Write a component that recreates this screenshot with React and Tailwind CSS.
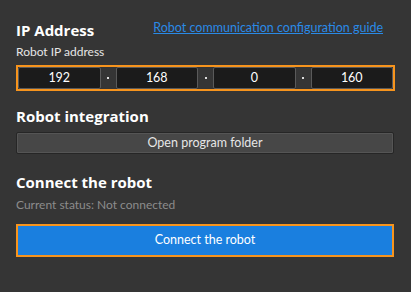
import { Fragment } from "react";

const octets = ["192", "168", "0", "160"];

const IpField = ({ value }) => (
    <div className="flex-1 h-[22px] bg-[#1b1b1b] border border-[#5a5a5a] rounded-[2px] flex items-center justify-center text-[12.5px] text-white">
        {value}
    </div>
);

const heading = { fontFamily: '"Open Sans", sans-serif' };

export default function App() {
    return (
        <div
            className="w-[411px] h-[292px] bg-[#353535] px-4 pt-[16px] text-[#e6e6e6]"
            style={{ fontFamily: 'Lato, "Open Sans", sans-serif' }}
        >
            <div className="flex items-end justify-between h-[22px]">
                <h2 className="text-[15px] font-bold leading-none text-white" style={heading}>IP Address</h2>
                <a className="text-[12.5px] leading-none text-[#2a8ae6] underline mr-[12px] mb-[4px]">
                    Robot communication configuration guide
                </a>
            </div>

            <div className="mt-[8px] text-[12px] leading-none">Robot IP address</div>

            <div className="mt-[7px] w-[379px] h-[26px] border-2 border-[#f7941d] flex items-center">
                {octets.map((o, i) => (
                    <Fragment key={i}>
                        {i > 0 && (
                            <div className="w-[15px] shrink-0 flex justify-center">
                                <span className="w-[2px] h-[2px] bg-[#dcdcdc]" />
                            </div>
                        )}
                        <IpField value={o} />
                    </Fragment>
                ))}
            </div>

            <h2 className="mt-[18px] text-[15px] font-bold leading-none text-white" style={heading}>Robot integration</h2>

            <button className="mt-[8px] w-[378px] h-[22px] bg-[#474747] border border-[#262626] rounded-[2px] shadow-[inset_0_0_0_1px_#555] text-[12.5px] text-[#e6e6e6] flex items-center justify-center">
                Open program folder
            </button>

            <h2 className="mt-[21px] text-[15px] font-bold leading-none text-white" style={heading}>Connect the robot</h2>

            <div className="mt-[9px] text-[12px] leading-none text-[#8c8c8c]">Current status: Not connected</div>

            <button className="mt-[13px] w-[378px] h-[33px] bg-[#1a7fdf] border-2 border-[#f7941d] text-[12.5px] text-white flex items-center justify-center">
                Connect the robot
            </button>
        </div>
    );
}
